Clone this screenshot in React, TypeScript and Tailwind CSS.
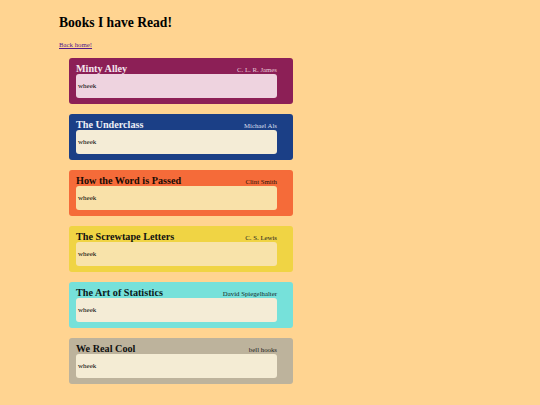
const books = [
  { title: "Minty Alley", author: "C. L. R. James", card: "bg-[#8c1f56]", inner: "bg-[#eed3df]", titleColor: "text-[#f4e6ee]", authorColor: "text-[#e6c9d7]" },
  { title: "The Underclass", author: "Michael Als", card: "bg-[#1b3f86]", inner: "bg-[#f4ecd6]", titleColor: "text-[#eef0f6]", authorColor: "text-[#d9dfee]" },
  { title: "How the Word is Passed", author: "Clint Smith", card: "bg-[#f56b39]", inner: "bg-[#f9e1a9]", titleColor: "text-[#1a0c05]", authorColor: "text-[#2a140a]" },
  { title: "The Screwtape Letters", author: "C. S. Lewis", card: "bg-[#f0d444]", inner: "bg-[#f8e3aa]", titleColor: "text-[#111]", authorColor: "text-[#222]" },
  { title: "The Art of Statistics", author: "David Spiegelhalter", card: "bg-[#76e1da]", inner: "bg-[#f4ecd6]", titleColor: "text-[#0a1a1a]", authorColor: "text-[#132a2a]" },
  { title: "We Real Cool", author: "bell hooks", card: "bg-[#bdb39c]", inner: "bg-[#f4ecd4]", titleColor: "text-[#111]", authorColor: "text-[#222]" },
];

export default function App() {
  return (
    <div className="min-h-[405px] w-[540px] bg-[#ffd491] text-black" style={{ fontFamily: '"Liberation Serif", "Times New Roman", serif' }}>
      <div className="pl-[59px] pt-[15px]">
        <h1 className="text-[13.6px] font-bold leading-[16px]">Books I have Read!</h1>
        <a href="#" className="mt-[10px] block text-[6.8px] leading-[8px] text-[#551a8b] underline">
          Back home!
        </a>
      </div>

      <div className="mt-[9px] flex flex-col gap-[10px] pl-[69px]">
        {books.map((b) => (
          <div key={b.title} className={`w-[224px] rounded-[3px] pt-[5px] pr-[16px] pb-[6px] pl-[7px] ${b.card}`}>
            <div className="flex h-[11px] items-baseline justify-between leading-[11px]">
              <h2 className={`text-[10.2px] font-bold ${b.titleColor}`}>{b.title}</h2>
              <span className={`text-[6.8px] ${b.authorColor}`}>{b.author}</span>
            </div>
            <div className={`flex h-[24px] items-center rounded-[3px] px-[2px] pt-[1px] text-[7px] ${b.inner}`}>
              wheek
            </div>
          </div>
        ))}
      </div>
    </div>
  );
}
